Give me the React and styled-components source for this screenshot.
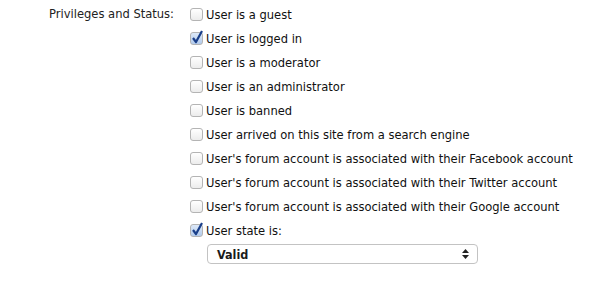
import styled, { createGlobalStyle } from "styled-components";

const GlobalStyle = createGlobalStyle`
	body {
		margin: 0;
		background: #fff;
		font-family: "DejaVu Sans Condensed", "DejaVu Sans", sans-serif;
		font-size: 12.8px;
		color: #111;
	}
`;

const options = [
	{ label: "User is a guest", checked: false },
	{ label: "User is logged in", checked: true },
	{ label: "User is a moderator", checked: false },
	{ label: "User is an administrator", checked: false },
	{ label: "User is banned", checked: false },
	{ label: "User arrived on this site from a search engine", checked: false },
	{ label: "User's forum account is associated with their Facebook account", checked: false },
	{ label: "User's forum account is associated with their Twitter account", checked: false },
	{ label: "User's forum account is associated with their Google account", checked: false },
	{ label: "User state is:", checked: true },
];

const Row = styled.div`
	display: grid;
	grid-template-columns: 174px 1fr;
	column-gap: 16px;
	padding-top: 4px;
`;

const Label = styled.div`
	text-align: right;
	line-height: 20px;
	color: #222;
`;

const List = styled.div`
	display: flex;
	flex-direction: column;
	gap: 4px;
`;

const Item = styled.label`
	display: flex;
	align-items: center;
	gap: 3px;
	height: 20px;
`;

const Box = styled.span`
	width: 11px;
	height: 11px;
	border: 1px solid #b4b4b4;
	border-radius: 3px;
	background: ${(p) => (p.$checked ? "linear-gradient(#dde9f8, #b3cbec)" : "linear-gradient(#fff, #ececec)")};
	position: relative;
	flex: none;
`;

const Tick = styled.svg`
	position: absolute;
	left: 0;
	top: -3px;
`;

const Select = styled.div`
	margin-left: 17px;
	height: 18px;
	border: 1px solid #c3c3c3;
	border-radius: 4px;
	display: flex;
	align-items: center;
	justify-content: space-between;
	padding: 0 8px 0 9px;
	width: 252px;
	font-size: 12.5px;
	font-weight: bold;
	color: #1a1a1a;
`;

const Arrows = styled.svg`
	flex: none;
`;

const App = () => {
	return (
		<>
			<GlobalStyle />
			<Row>
				<Label>Privileges and Status:</Label>
				<List>
					{options.map((o) => (
						<Item key={o.label}>
							<Box $checked={o.checked}>
								{o.checked && (
									<Tick width="13" height="14" viewBox="0 0 13 14">
										<path d="M2 8 L5 12 L11 1" fill="none" stroke="#1a3f8a" strokeWidth="2.2" strokeLinejoin="round" />
									</Tick>
								)}
							</Box>
							{o.label}
						</Item>
					))}
					<Select>
						Valid
						<Arrows width="7" height="10" viewBox="0 0 7 10">
							<path d="M3.5 0 L7 4 H0 Z M0 6 H7 L3.5 10 Z" fill="#222" />
						</Arrows>
					</Select>
				</List>
			</Row>
		</>
	);
};

export default App;
